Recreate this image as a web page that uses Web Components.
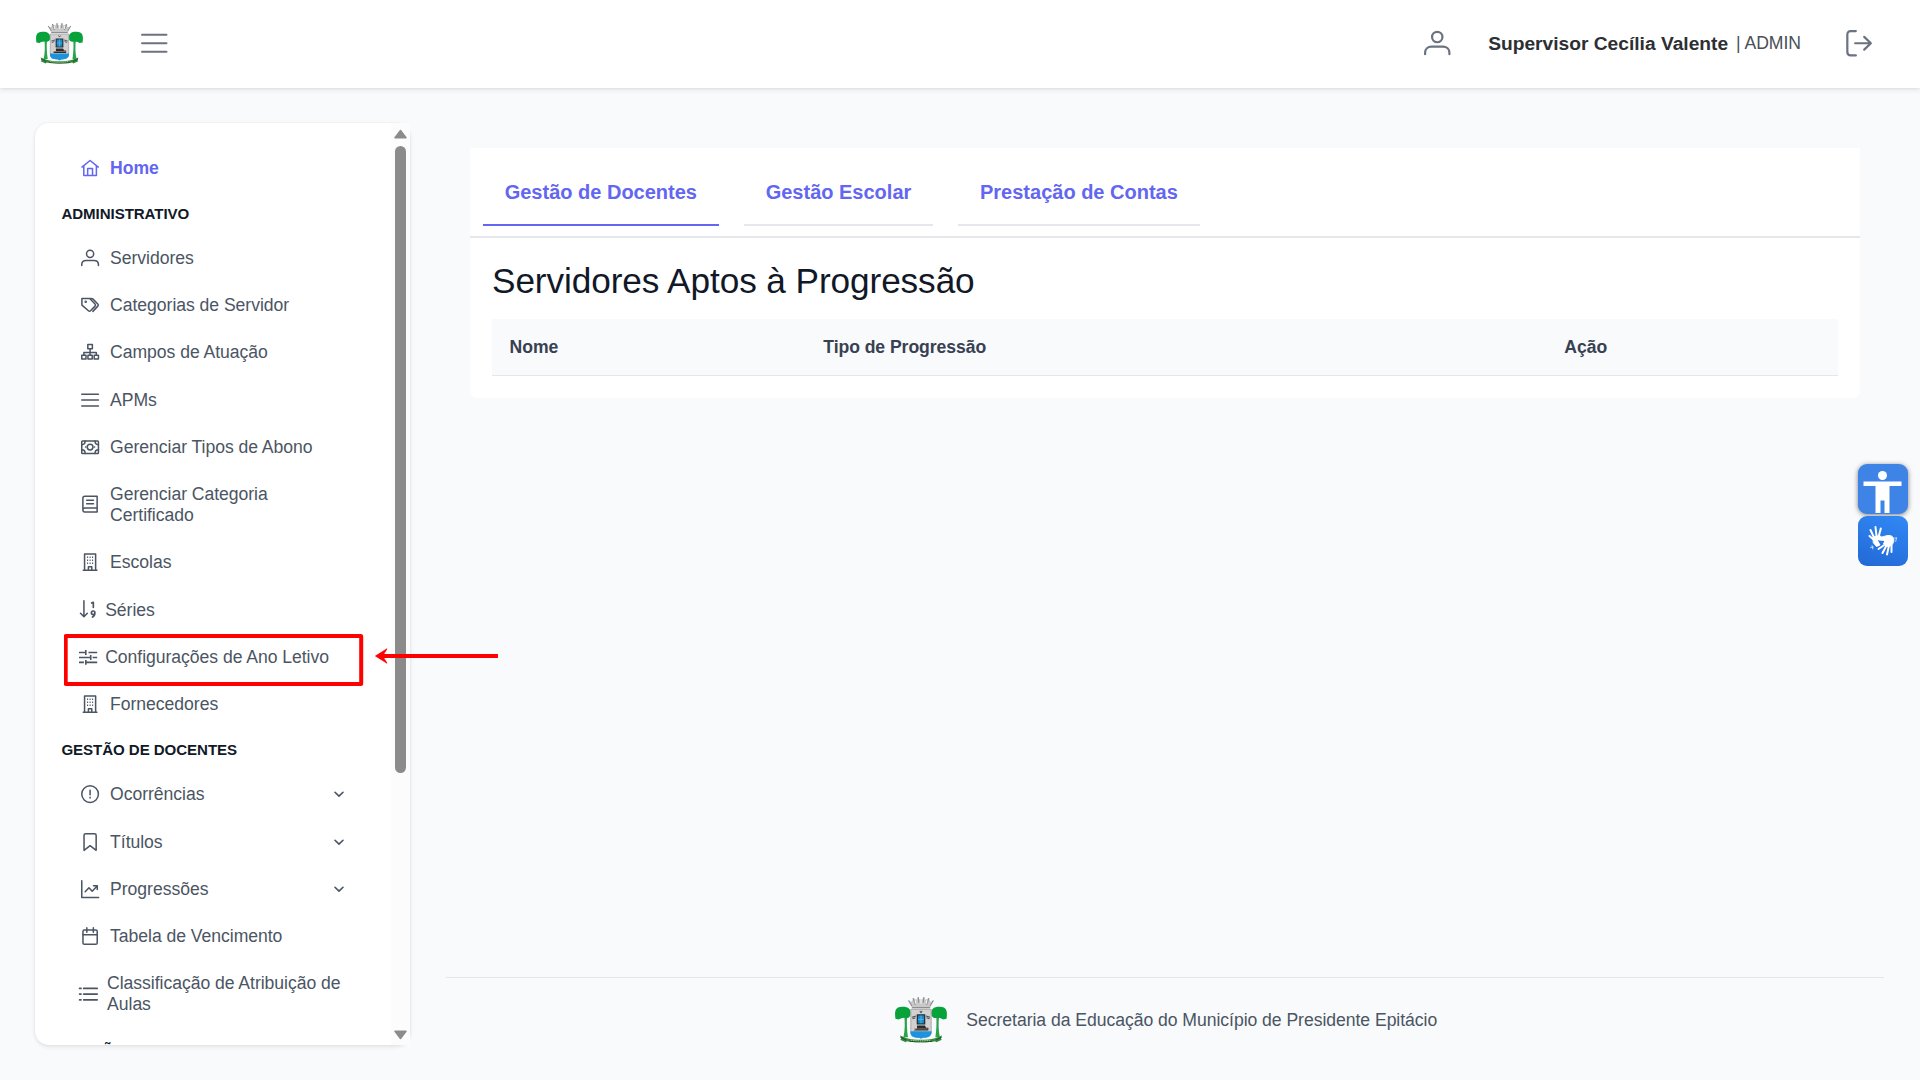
<!DOCTYPE html>
<html lang="pt-BR">
<head>
<meta charset="utf-8">
<title>Secretaria da Educação</title>
<style>
html,body{margin:0;height:100%;overflow:hidden}
body{background:#f8fafc;font-family:"Liberation Sans",Arial,sans-serif;font-size:17.6px;letter-spacing:-.043px;color:#4b5563}
</style>
</head>
<body>
<app-shell></app-shell>
<script>
const define = (name, html, setup) => {
  const t = document.createElement('template');
  t.innerHTML = html;
  customElements.define(name, class extends HTMLElement {
    connectedCallback() {
      if (this.shadowRoot) return;
      const root = this.attachShadow({ mode: 'open' });
      root.appendChild(t.content.cloneNode(true));
      if (setup) setup(this, root);
    }
  });
};

const ICONS = {
  home: '<path d="M1.200 10.600 12 2l10.800 8.600M3.700 9v12.800h16.600V9M8.800 21.800v-9.200h6.400v9.200"/>',
  user: '<circle cx="12" cy="6.400" r="4.700"/><path d="M1 21.900v-1.300c0-3.400 2.500-5.500 5.800-5.500h10.400c3.300 0 5.800 2.100 5.800 5.500v1.300"/>',
  tags: '<path d="M1.200 3.400h10.300l7 7.200a2 2 0 0 1 0 2.800l-5.900 6a2 2 0 0 1-2.800 0L1.200 12z"/><path d="m12.600 3.400 2.600.1 7 7.100a2 2 0 0 1 0 2.800L15.700 20.300"/><circle cx="6.200" cy="7.500" r=".7" fill="currentColor"/>',
  sitemap: '<path d="M9 2h6v5.500H9zM1 16.200h5.600v5H1zM9.200 16.200h5.600v5H9.200zM17.400 16.200H23v5h-5.600zM12 7.500v8.700M3.800 16.200v-3.700h16.400v3.700"/>',
  bars: '<path d="M1 4.300h22M1 12h22M1 19.700h22"/>',
  bill: '<rect x="1" y="4" width="22" height="16.300" rx="1"/><circle cx="12" cy="12" r="3.800"/><path d="M1 8.800c3.300 0 4.500-1.800 4.500-4.800M23 8.800c-3.300 0-4.500-1.800-4.500-4.800M1 15.500c3.300 0 4.500 1.800 4.500 4.800M23 15.500c-3.300 0-4.500 1.800-4.500 4.800M6 12h.3M17.700 12h.3"/>',
  book: '<path d="M21.300 17H5c-1.700 0-2.500.9-2.500 2.500S3.300 22.500 5 22.500h16.300V1.500H5C3.300 1.500 2.500 2.400 2.500 4v15.500M7.500 7h9M7.500 11.500h9"/>',
  building: '<path d="M4.700 22.500V1.300h14.600v21.200M3 22.900h18M9.800 22.500v-4.300h4.400v4.300"/><path d="M8 5.500h1.400M11.300 5.500h1.400M14.600 5.500H16M8 9.500h1.400M11.300 9.500h1.400M14.600 9.500H16M8 13.500h1.400M11.300 13.500h1.400M14.600 13.500H16" stroke-width="1.900" stroke-linecap="butt"/>',
  sort: '<path d="M6.500 1v21M2 17.500l4.500 4.700 4.500-4.700" stroke-width="2"/><path d="M16.600 4 18.900 3v6.800M21 16.800a2.300 2.300 0 1 1-4.600 0 2.300 2.300 0 0 1 4.600 0c0 3-1.200 4.700-3.200 5.700" stroke-width="2.200"/>',
  sliders: '<path d="M0 6h9M9 2.800v6.400M12.500 6H24M0 12.500h14.500M15.500 9.300v6.400M18 12.500H24M0 19h6.500M9 15.800v6.400M9.500 19H24" stroke-width="2.100" stroke-linecap="butt"/>',
  alert: '<circle cx="12" cy="12" r="11"/><path d="M12 7v6M12 16.300v.8" stroke-width="2"/>',
  bookmark: '<path d="M4 22.900V3.200C4 1.900 4.700 1.100 6 1.100h12c1.300 0 2 .8 2 2.100v19.700l-8-6.200z"/>',
  chart: '<path d="M1 1v22h22.300M5.500 15.500l5-5.300 4.300 4.600 6.500-7M16.500 7.600h5v4.800"/>',
  calendar: '<rect x="2.600" y="4" width="18.800" height="18.800" rx="1.800"/><path d="M2.600 10.300h18.800M7.700 1v6M16.300 1v6"/>',
  list: '<path d="M6.200 4.500H24M6.200 12H24M6.200 19.500H24" stroke-width="2.300"/><path d="M.8 4.500h1.800M.8 12h1.800M.8 19.500h1.800" stroke-width="2.300"/>',
  down: '<path d="m6 9.400 6 5.800 6-5.800" stroke-width="2.500"/>',
  exit: '<path d="M8.900 1H4.300C2.300 1 1.200 2 1.200 4v16c0 2 1.100 3 3.100 3h4.600M8.300 12h14M16.500 6.200l6 5.800-6 5.800"/>'
};

define('ui-icon', `<style>
:host{display:block;flex:none;width:18.2px;height:18.2px}
svg{display:block;width:100%;height:100%;overflow:visible}
</style><svg viewBox="0 0 24 24" fill="none" stroke="currentColor" stroke-width="2" stroke-linecap="round" stroke-linejoin="round"></svg>`,
(el, root) => { root.querySelector('svg').innerHTML = ICONS[el.getAttribute('name')]; });

define('city-crest', `<style>:host{display:block;flex:none}svg{display:block;width:100%;height:100%}</style>
<svg viewBox="0 0 46 42" preserveAspectRatio="none">
<path d="M13 4l2 0 1-3 3 1.500L20 .500l2 1.500h2l2-1.500 1 2 3-1.500 1 3h2l-2 6H15z" fill="#c9c9c9"/>
<path d="M12 3l3 5M16 1l2 6M20.500 0l.5 5M25.500 0 25 5M30 1l-2 6M34 3l-3 5M15 9.500h16" stroke="#8e8e8e" stroke-width="1" fill="none"/>
<path d="M18 3v3M23 2v4M28 3v3" stroke="#fff" stroke-width=".8"/>
<path d="M9.200 17h-1c.7 6 .6 13-.7 19h4c-1-6-1.200-13-.8-19zM37.500 17h-1c.4 6 .2 13-.8 19h4c-1.300-6-1.400-13-.7-19z" fill="#28a44c"/>
<path d="M.4 19.500C-.4 13.500 0 9.700 4.500 9c5-1 9.500.5 9.500 5.500 0 3.800-3 5-5 4-3-.2-5 1-5.500 1.500zM45.600 19.500c.8-6 .4-9.800-4.100-10.500-5-1-9.500.5-9.500 5.500 0 3.800 3 5 5 4 3-.2 5 1 5.500 1.500z" fill="#08a23b"/>
<path d="M14 11h18v20c0 4-3 5-9 5s-9-1-9-5z" fill="#d2d0d0" stroke="#a5a2a2" stroke-width=".8"/>
<path d="M13.700 30.500h18.600c.5 4.500-3 6-7.500 5.900l-1.800 1-1.800-1C16 36.400 13.200 35 13.700 30.500z" fill="#1d93dd"/>
<path d="M19.800 16h6.400v8h-6.400z" fill="#168bce" stroke="#26333c" stroke-width="1.200"/>
<path d="M20.500 20h5M23 16.500v7" stroke="#58b4e5" stroke-width=".8"/>
<path d="M15 18l3.500-1M15.500 19.500l2.500-1M31 18l-3.500-1M30.500 19.500l-2.500-1M22 12.500l1 1.500 1-1.500" stroke="#4b4f53" stroke-width=".9" fill="none"/>
<path d="M19.500 25.500h7l1 2h2V30H16.500l3-2z" fill="#282c32"/><path d="M17 28.500h12" stroke="#a87751" stroke-width=".8"/>
<path d="M4.500 34.500l6 2.300c8 2 17 2 25 0l6-2.300-.8 3 .8.800-5 2.200-1-1c-5 1.200-20 1.200-25 0l-1 1-5-2.200 1-.8z" fill="#37893f"/>
<path d="M5 36l5 2.500M41 36l-5 2.500M13 39.500c7 .8 13 .8 20 0" stroke="#1d5528" stroke-width=".9" fill="none"/>
<path d="M14 38.500c6 1 12 1 18 0" stroke="#c4dba0" stroke-width=".8" stroke-dasharray="1.200 .8" fill="none"/>
</svg>`);

define('top-bar', `<style>
:host{display:flex;align-items:center;height:88px;flex:none;background:#fff;box-shadow:0 2px 5px rgba(0,0,0,.09),0 0 2px rgba(0,0,0,.08);box-sizing:border-box;padding:0 47.500px 0 36px;position:relative;z-index:2;color:#6b7280}
city-crest{width:47px;height:42px}
.menu{width:26.500px;height:26.500px;margin-left:57.800px;margin-bottom:1px}
.user{width:26.500px;height:26.500px;margin-left:auto;margin-bottom:1px}
.name{margin-left:38px;font-size:19.200px;letter-spacing:0;font-weight:700;color:#2d2f33;line-height:22px;margin-bottom:1px;white-space:nowrap}
.role{margin-left:8px;color:#495057;line-height:22px;margin-bottom:3px;white-space:nowrap}
.exit{width:26.500px;height:26.500px;margin-left:45px;margin-bottom:1px}
</style><city-crest></city-crest><ui-icon class="menu" name="bars"></ui-icon><ui-icon class="user" name="user"></ui-icon><span class="name">Supervisor Cecília Valente</span><span class="role">| ADMIN</span><ui-icon class="exit" name="exit"></ui-icon>`);

define('menu-title', `<style>:host{display:block;height:43px;line-height:43px;font-size:15.080px;letter-spacing:-.06px;font-weight:700;color:#111827;white-space:nowrap;flex:none}</style><slot></slot>`);

define('menu-item', `<style>
:host{display:flex;align-items:center;flex:none;box-sizing:border-box;padding:13.120px 17.600px;line-height:21px;color:#4b5563}
:host([active]){color:#6366f1;font-weight:700}
.box{width:22.530px;display:flex;justify-content:center;margin-right:8.600px;margin-bottom:1px;flex:none}
:host([narrow]) .box{width:17.600px}
:host([mid]) .box{width:19.500px;justify-content:flex-start}
.down{width:16px;height:16px;margin-left:auto;margin-bottom:1px}
</style><span class="box"><ui-icon></ui-icon></span><span><slot></slot></span>`,
(el, root) => {
  const i = root.querySelector('ui-icon');
  const n = document.createElement('ui-icon');
  n.setAttribute('name', el.getAttribute('icon'));
  i.replaceWith(n);
  if (el.hasAttribute('expand')) {
    const d = document.createElement('ui-icon');
    d.setAttribute('name', 'down');
    d.className = 'down';
    root.appendChild(d);
  }
});

define('scroll-rail', `<style>
:host{display:flex;flex-direction:column;align-items:center;width:19px;flex:none;background:#fcfcfc;box-sizing:border-box;padding:6px 0 5px}
svg{display:block;width:13px;height:10px;flex:none}
.thumb{width:11px;height:627px;border-radius:6px;background:#8b8b8b;margin-top:7px}
.end{margin-top:auto}
</style><svg viewBox="0 0 13 10"><path d="M6.500 1.500 12 8.700H1z" fill="#8b8b8b" stroke="#8b8b8b" stroke-width="1.500" stroke-linejoin="round"/></svg><div class="thumb"></div><svg class="end" viewBox="0 0 13 10"><path d="M6.500 8.500 12 1.300H1z" fill="#8b8b8b" stroke="#8b8b8b" stroke-width="1.500" stroke-linejoin="round"/></svg>`);

define('side-menu', `<style>
:host{display:flex;width:375px;height:922px;flex:none;background:#fff;border-radius:14px;box-shadow:0 3px 5px rgba(0,0,0,.03),0 0 2px rgba(0,0,0,.06),0 1px 4px rgba(0,0,0,.08)}
nav{display:flex;flex-direction:column;flex:1;min-width:0;overflow:hidden;box-sizing:border-box;padding:21.650px 26.400px 0;border-radius:14px 0 0 14px}
</style><nav>
<menu-item active icon="home">Home</menu-item>
<menu-title>ADMINISTRATIVO</menu-title>
<menu-item icon="user">Servidores</menu-item>
<menu-item icon="tags">Categorias de Servidor</menu-item>
<menu-item icon="sitemap">Campos de Atuação</menu-item>
<menu-item icon="bars">APMs</menu-item>
<menu-item icon="bill">Gerenciar Tipos de Abono</menu-item>
<menu-item icon="book">Gerenciar Categoria<br>Certificado</menu-item>
<menu-item icon="building">Escolas</menu-item>
<menu-item narrow icon="sort">Séries</menu-item>
<menu-item narrow icon="sliders">Configurações de Ano Letivo</menu-item>
<menu-item icon="building">Fornecedores</menu-item>
<menu-title style="height:43.300px;line-height:44px">GESTÃO DE DOCENTES</menu-title>
<menu-item expand icon="alert">Ocorrências</menu-item>
<menu-item expand icon="bookmark">Títulos</menu-item>
<menu-item expand icon="chart">Progressões</menu-item>
<menu-item icon="calendar">Tabela de Vencimento</menu-item>
<menu-item mid icon="list" style="margin-right:-14px">Classificação de Atribuição de<br>Aulas</menu-item>
<menu-title style="line-height:43.500px">GESTÃO ESCOLAR</menu-title>
</nav><scroll-rail></scroll-rail>`);

define('tab-link', `<style>
:host{display:block;box-sizing:border-box;padding:7px 22px 0;height:66px;line-height:51px;font-size:20px;letter-spacing:0;font-weight:700;color:#6366f1;border-bottom:2px solid #e5e7eb;white-space:nowrap}
:host([active]){border-color:#6366f1}
</style><slot></slot>`);

define('data-head', `<style>
:host{display:grid;grid-template-columns:313.700px 741px 1fr;height:57px;box-sizing:border-box;background:#f8fafc;border-bottom:1px solid #e5e7eb;font-weight:700;color:#374151;line-height:57px;letter-spacing:-.06px}
::slotted(span){padding-left:17.600px;height:56px}
</style><slot></slot>`);

define('main-card', `<style>
:host{display:block;width:1390px;height:250px;background:#fff;border-radius:0 0 7px 7px}
.tabs{display:flex;gap:24.700px;padding:12px 12.700px 10px;border-bottom:2px solid #e5e7eb}
.body{padding:23px 22px 0}
h1{margin:0 0 18px;font-weight:400;font-size:35.200px;letter-spacing:-.085px;line-height:40px;color:#111827;white-space:nowrap}
</style><div class="tabs"><tab-link active>Gestão de Docentes</tab-link><tab-link>Gestão Escolar</tab-link><tab-link>Prestação de Contas</tab-link></div>
<div class="body"><h1>Servidores Aptos à Progressão</h1><data-head><span>Nome</span><span>Tipo de Progressão</span><span>Ação</span></data-head></div>`);

define('page-footer', `<style>
:host{display:flex;align-items:center;justify-content:center;gap:19.500px;height:103px;box-sizing:border-box;border-top:1px solid #e2e6ea;padding-bottom:17px}
city-crest{width:52px;height:47px;margin-left:2px}
</style><city-crest></city-crest><span>Secretaria da Educação do Município de Presidente Epitácio</span>`);

define('side-widgets', `<style>
:host{display:flex;flex-direction:column;gap:2px;position:absolute;right:12px;top:464px;width:50px;z-index:3}
div{height:50px;border-radius:9px;overflow:hidden}
.a{background:#3d84e6;box-shadow:0 1px 5px rgba(0,0,0,.5)}
.b{background:linear-gradient(20deg,#2268d6,#3189f5)}
svg{display:block;width:50px;height:50px}
</style>
<div class="a"><svg viewBox="0 0 50 50" fill="#fff"><circle cx="24.500" cy="11.500" r="4.500"/><path d="M5.500 17.500h38V22H31.500v27h-5V36.500h-4V49h-5V22h-12z"/></svg></div>
<div class="b"><svg viewBox="0 0 50 50" fill="none" stroke="#fff" stroke-linecap="round" stroke-linejoin="round">
<path d="M15.500 21l6-1.500 2 1.500-4 3.500 2.500 4.500-3.500 1.500-3-3.500z" fill="#fff" stroke-width="1"/>
<path d="M15.500 23.500l-4-3.500M16 21.500 12.500 14M18.500 20 17.500 11M20.800 20 22.800 12.500" stroke-width="2"/>
<path d="M21 22.500c2.500-1.500 5.500-2.500 9-3 4-.4 6 2 5.800 5-.3 3-2 5.500-6 6l-4.300-2.500 1.500-3.500-6-.5z" fill="#fff" stroke-width="1"/>
<path d="M27 28.500l-6.500 4.500M28.500 29.500 24.500 37M31 29.500l-2 9M33.500 27l0 9" stroke-width="2"/>
<path d="M36.500 22l2 0M38.500 22l-.8 3.500M12.500 31.500l3-.5M14 29.500l.8 3.500" stroke-width=".9" opacity=".75"/></svg></div>`);

define('focus-marker', `<style>
:host{display:block;position:absolute;left:64px;top:633.500px;width:436px;height:52px;z-index:4;pointer-events:none}
svg{display:block}
</style><svg width="436" height="52" viewBox="0 0 436 52" fill="none" stroke="#f00"><rect x="1.700" y="2" width="295.500" height="48" rx=".5" stroke-width="4"/><path d="M316 22h118" stroke-width="3.800"/><path d="M311.500 22l11.500-7.200-4.500 7.200 4.500 7.200z" fill="#f00" stroke-width=".8"/></svg>`);

define('app-shell', `<style>
:host{display:flex;flex-direction:column;height:1080px;position:relative;overflow:hidden}
.row{display:flex;flex:1;min-height:0}
side-menu{margin:35px 0 0 35px}
main{display:flex;flex-direction:column;justify-content:space-between;flex:1;min-width:0;margin:0 36px 0 36px}
main-card{margin:60px 0 0 24px}
</style><top-bar></top-bar><div class="row"><side-menu></side-menu><main><main-card></main-card><page-footer></page-footer></main></div><side-widgets></side-widgets><focus-marker></focus-marker>`);
</script>
</body>
</html>
